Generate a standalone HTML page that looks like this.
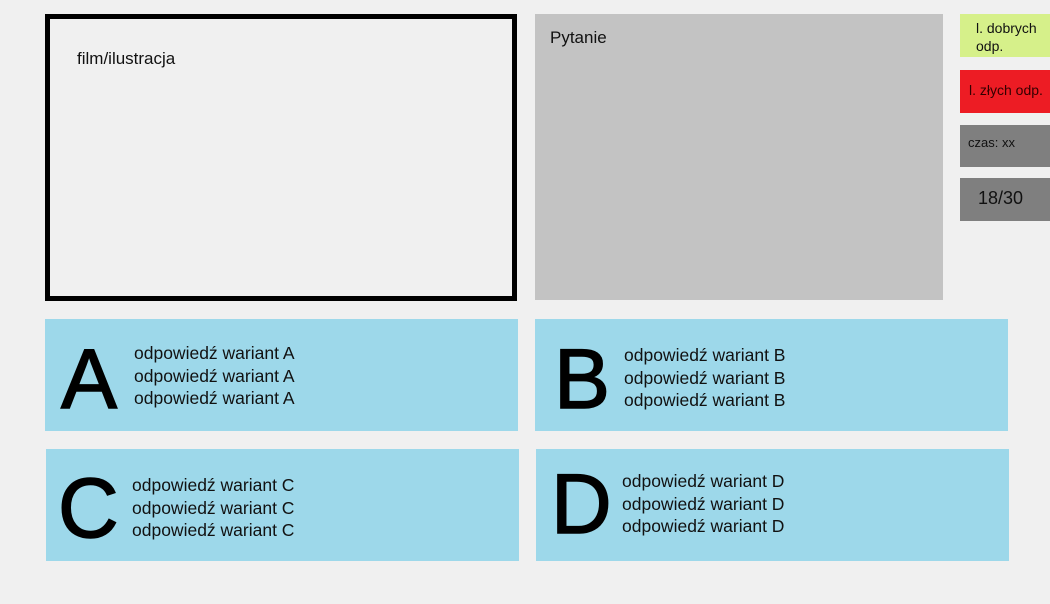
<!DOCTYPE html><html><head><meta charset="utf-8"><style>
body{margin:0;width:1050px;height:604px;background:#f0f0f0;font-family:"Liberation Sans","DejaVu Sans",sans-serif;position:relative;overflow:hidden;color:#111}
div{position:absolute;box-sizing:border-box;white-space:nowrap}
.ans{background:#9dd8ea}
.L{font-size:84px;line-height:1;color:#000;-webkit-text-stroke:1.5px #000}
.t{font-size:17.5px;line-height:22.5px}
</style></head><body>
<div style="left:45px;top:14px;width:472px;height:287px;border:5px solid #000"></div>
<div style="left:77px;top:49px;font-size:17px">film/ilustracja</div>
<div style="left:535px;top:14px;width:408px;height:286px;background:#c3c3c3"></div>
<div style="left:550px;top:28px;font-size:17px">Pytanie</div>
<div style="left:960px;top:14px;width:90px;height:43px;background:#d6f08a;font-size:14px;line-height:18px;padding:5px 0 0 16px">l. dobrych<br>odp.</div>
<div style="left:960px;top:70px;width:90px;height:43px;background:#ed1c24;font-size:14px;padding:12px 0 0 9px;color:#300">l. złych odp.</div>
<div style="left:960px;top:125px;width:90px;height:42px;background:#7f7f7f;font-size:13px;padding:10px 0 0 8px">czas: xx</div>
<div style="left:960px;top:178px;width:90px;height:43px;background:#7f7f7f;font-size:18px;padding:10px 0 0 18px">18/30</div>

<div class="ans" style="left:45px;top:319px;width:473px;height:112px"></div>
<div class="L" style="left:61px;top:337px">A</div>
<div class="t" style="left:134px;top:342px">odpowiedź wariant A<br>odpowiedź wariant A<br>odpowiedź wariant A</div>

<div class="ans" style="left:535px;top:319px;width:473px;height:112px"></div>
<div class="L" style="left:554px;top:337px">B</div>
<div class="t" style="left:624px;top:344px">odpowiedź wariant B<br>odpowiedź wariant B<br>odpowiedź wariant B</div>

<div class="ans" style="left:46px;top:449px;width:473px;height:112px"></div>
<div class="L" style="left:58px;top:466px">C</div>
<div class="t" style="left:132px;top:474px">odpowiedź wariant C<br>odpowiedź wariant C<br>odpowiedź wariant C</div>

<div class="ans" style="left:536px;top:449px;width:473px;height:112px"></div>
<div class="L" style="left:551px;top:462px">D</div>
<div class="t" style="left:622px;top:470px">odpowiedź wariant D<br>odpowiedź wariant D<br>odpowiedź wariant D</div>
</body></html>
